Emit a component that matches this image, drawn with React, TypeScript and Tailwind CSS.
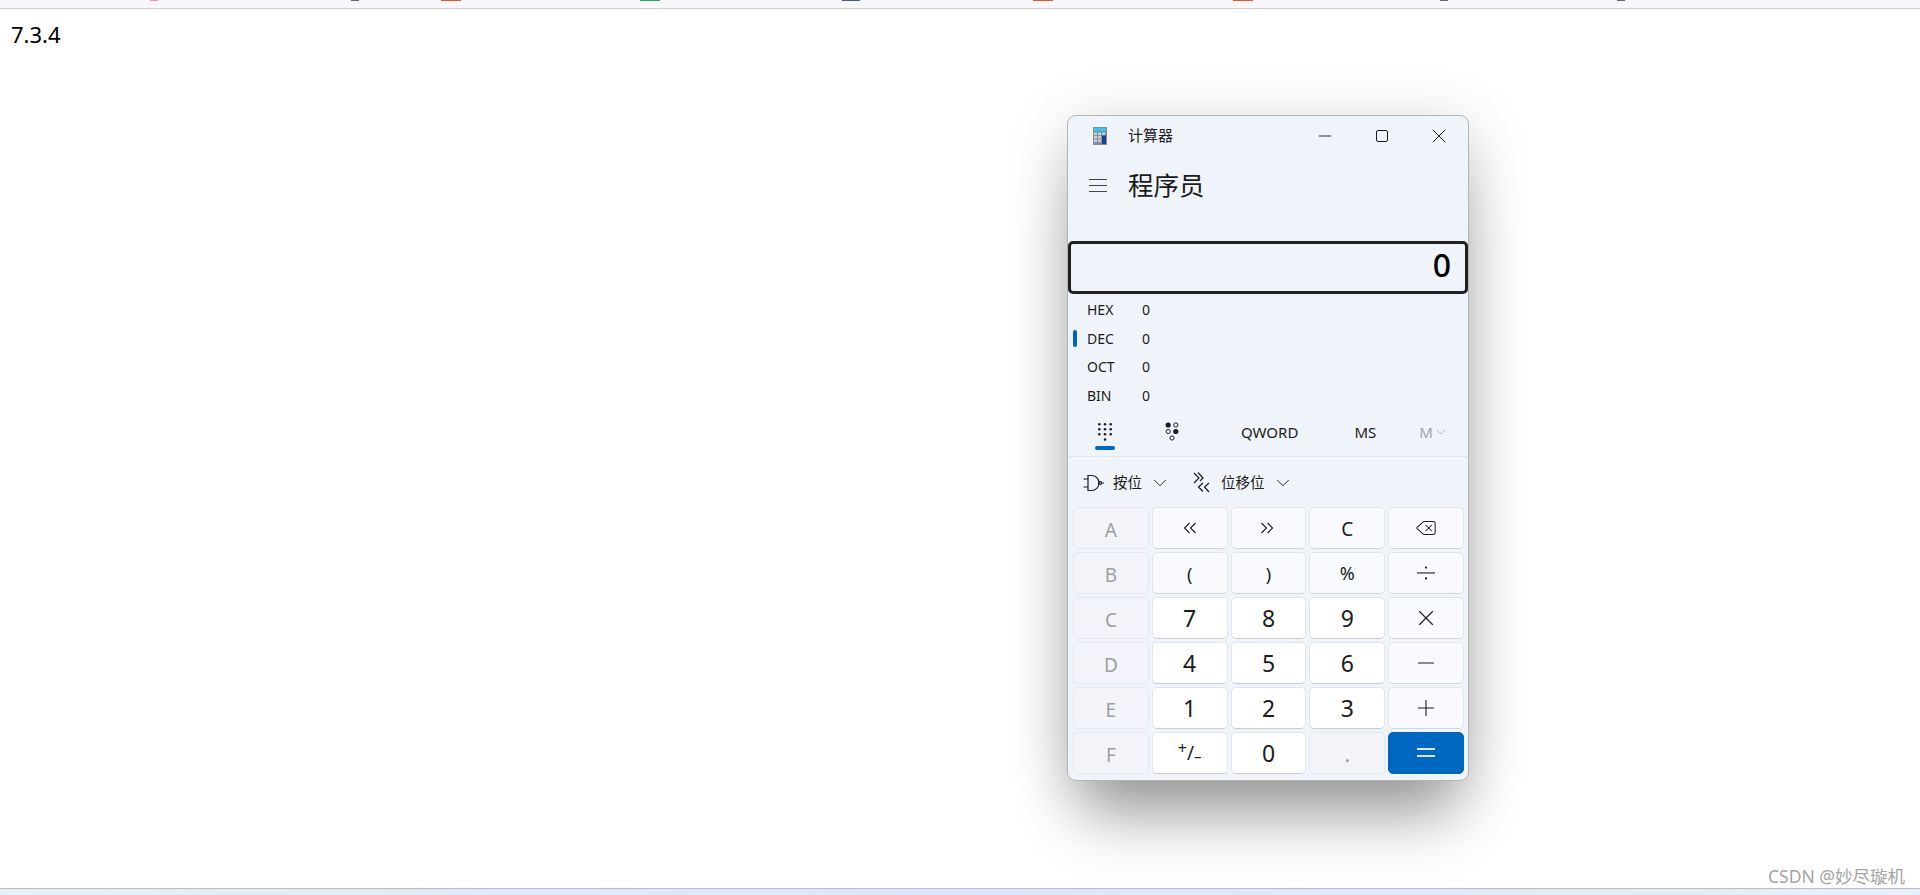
import { ChevronDown, Delete, Minus, Plus, X } from "lucide-react";
import type { ReactNode } from "react";

const CJK = "font-['Noto_Sans','Noto_Sans_CJK_SC',sans-serif]";

function AppGlyph() {
  return (
    <svg width="14" height="18" viewBox="0 0 14 18">
      <rect width="14" height="18" fill="#7f8b99" />
      <rect x="1" y="1" width="12" height="3.5" fill="#35c6ee" />
      {[5.5, 9, 12.5].map((y) =>
        [1, 5, 9].map((x) => (
          <rect key={`${x}-${y}`} x={x} y={y} width="3" height="2.6" fill={x === 9 && y > 6 ? "#17418a" : "#c9d0d8"} />
        )),
      )}
      <rect x="9" y="8.5" width="4" height="8.5" fill="#17418a" />
    </svg>
  );
}

function Keypad() {
  return (
    <svg width="14" height="18" viewBox="0 0 14 18" fill="#1b1b1b">
      {[0, 1, 2].map((r) =>
        [0, 1, 2].map((c) => <circle key={`${r}${c}`} cx={1.3 + c * 5.7} cy={1.3 + r * 5} r="1.25" />),
      )}
      <circle cx="7" cy="16.4" r="1.25" />
    </svg>
  );
}

function BitToggle() {
  return (
    <svg width="14" height="19" viewBox="0 0 14 19" strokeWidth="1">
      <circle cx="3.2" cy="3" r="2.6" fill="#1b1b1b" />
      <circle cx="10.8" cy="3" r="2.1" fill="none" stroke="#1b1b1b" />
      <circle cx="3.2" cy="9.5" r="2.1" fill="none" stroke="#1b1b1b" />
      <circle cx="10.8" cy="9.5" r="2.6" fill="#1b1b1b" />
      <circle cx="7" cy="16" r="2.1" fill="none" stroke="#1b1b1b" />
    </svg>
  );
}

function GateIcon() {
  return (
    <svg width="21" height="18" viewBox="0 0 21 18" fill="none" stroke="#1b1b1b" strokeWidth="1.2">
      <path d="M5 1.5h3.5a7.5 7.5 0 0 1 0 15H5z" />
      <path d="M0.5 5h4.5M0.5 13h4.5M18.5 9h2.5" />
      <circle cx="17.2" cy="9" r="1.4" />
    </svg>
  );
}

function ShiftIcon() {
  return (
    <svg width="17" height="21" viewBox="0 0 17 21" fill="none" stroke="#1b1b1b" strokeWidth="1.2">
      <path d="M1 1l5 5-5 5M5 0.5l5 5.5-3 3" />
      <path d="M10 11l-4.5 4 4.5 4.5M16 11l-4.5 4 4.5 5" />
    </svg>
  );
}

function ChevronPair({ flip }: { flip?: boolean }) {
  return (
    <svg width="16" height="12" viewBox="0 0 16 12" fill="none" stroke="#1b1b1b" strokeWidth="1.1">
      <path d={flip ? "M1.5 1l5 5-5 5M7.5 1l5 5-5 5" : "M7.5 1l-5 5 5 5M13.5 1l-5 5 5 5"} />
    </svg>
  );
}

function Divide() {
  return (
    <svg width="18" height="14" viewBox="0 0 18 14" fill="#1b1b1b">
      <rect y="6.4" width="18" height="1.1" />
      <circle cx="9" cy="1.6" r="1.1" />
      <circle cx="9" cy="12.4" r="1.1" />
    </svg>
  );
}

type Tone = "off" | "op" | "num" | "dim" | "eq";

const toneClass: Record<Tone, string> = {
  off: "bg-[#f2f4f9] border-[#e6e8ed] text-[#9b9ea3] text-[19px] pt-[4px]",
  op: "bg-[#f8fafd] border-[#e3e5ea] border-b-[#d2d4d9] text-[#1b1b1b] text-[18px]",
  num: "bg-white border-[#e3e5ea] border-b-[#c9cbd0] text-[#1b1b1b] text-[23px] pt-[1px]",
  dim: "bg-[#f2f4f9] border-[#e6e8ed] text-[#8b8e93] text-[19px] pt-[4px]",
  eq: "bg-[#0067c0] border-[#0067c0] text-white",
};

function Key({ tone, children }: { tone: Tone; children: ReactNode }) {
  return (
    <div className={`flex items-center justify-center rounded-[5px] border ${toneClass[tone]}`}>{children}</div>
  );
}

function Calculator() {
  const radix = [
    ["HEX", false],
    ["DEC", true],
    ["OCT", false],
    ["BIN", false],
  ] as const;

  return (
    <div
      className={`absolute left-[1067px] top-[115px] flex h-[666px] w-[402px] flex-col rounded-[9px] border border-[#b4b4b4] bg-[#eff3fa] text-[#1b1b1b] shadow-[0_50px_60px_-15px_rgba(0,0,0,0.32),0_10px_60px_rgba(0,0,0,0.18)] ${CJK}`}
    >
      {/* title bar */}
      <div className="flex h-[39px] items-center">
        <div className="ml-[25px] w-[35px]">
          <AppGlyph />
        </div>
        <span className="text-[15px] leading-none text-[#222]">计算器</span>
        <div className="ml-auto mr-[17px] flex items-center">
          <Minus size={20} strokeWidth={1.1} />
          <div className="ml-[41px] h-[12px] w-[12px] rounded-[2px] border border-[#1b1b1b]" />
          <X size={24} strokeWidth={1} className="ml-[39px]" />
        </div>
      </div>

      {/* mode header */}
      <div className="flex h-[63px] items-center pb-[2px]">
        <div className="ml-[21px] flex w-[39px] flex-col gap-[5px]">
          <span className="h-px w-[18px] bg-[#444]" />
          <span className="h-px w-[18px] bg-[#444]" />
          <span className="h-px w-[18px] bg-[#444]" />
        </div>
        <span className="text-[25.5px] leading-none">程序员</span>
      </div>

      {/* result box */}
      <div className="mt-[23px] flex h-[53px] items-center justify-end rounded-[5px] border-[3px] border-[#222] pb-[5px] pr-[14px]">
        <span className="text-[32px] font-medium leading-none text-black">0</span>
      </div>

      {/* radix readouts */}
      <div className="mt-[1px] flex flex-col text-[14px]">
        {radix.map(([name, active]) => (
          <div key={name} className="flex h-[28.7px] items-center">
            <span className={`ml-[5px] h-[17px] w-[4px] rounded-full ${active ? "bg-[#0067c0]" : ""}`} />
            <span className="ml-[10px] w-[55px]">{name}</span>
            <span>0</span>
          </div>
        ))}
      </div>

      {/* word size and memory row */}
      <div className="relative flex h-[47px] items-center border-b border-[#e1e4ea] pb-[2px] text-[15px]">
        <div className="ml-[30px] w-[67px]">
          <Keypad />
        </div>
        <BitToggle />
        <span className="ml-[62px]">QWORD</span>
        <span className="ml-[56px]">MS</span>
        <span className="ml-[43px] text-[#a0a3a8]">M</span>
        <ChevronDown size={16} strokeWidth={1.1} className="text-[#a0a3a8]" />
        <span className="absolute left-[27px] top-[36px] h-[4px] w-[20px] rounded-full bg-[#0067c0]" />
      </div>

      {/* bitwise and shift menus */}
      <div className="flex h-[50px] items-center pt-[2px] text-[14.5px]">
        <div className="ml-[15px]">
          <GateIcon />
        </div>
        <span className="ml-[9px]">按位</span>
        <ChevronDown size={22} strokeWidth={1} className="ml-[7px]" />
        <div className="ml-[22px]">
          <ShiftIcon />
        </div>
        <span className="ml-[11px]">位移位</span>
        <ChevronDown size={22} strokeWidth={1} className="ml-[7px]" />
      </div>

      {/* keypad */}
      <div className="grid flex-1 grid-cols-5 auto-rows-[42px] gap-[3px] pl-[5px] pr-[4px]">
        <Key tone="off">A</Key>
        <Key tone="op"><ChevronPair /></Key>
        <Key tone="op"><ChevronPair flip /></Key>
        <Key tone="op"><span className="pt-[2px] text-[19px]">C</span></Key>
        <Key tone="op"><Delete size={22} strokeWidth={1.1} /></Key>

        <Key tone="off">B</Key>
        <Key tone="op"><span className="pt-[3px]">(</span></Key>
        <Key tone="op"><span className="pt-[3px]">)</span></Key>
        <Key tone="op"><span className="pt-[2px]">%</span></Key>
        <Key tone="op"><Divide /></Key>

        <Key tone="off">C</Key>
        <Key tone="num">7</Key>
        <Key tone="num">8</Key>
        <Key tone="num">9</Key>
        <Key tone="op"><X size={26} strokeWidth={1} /></Key>

        <Key tone="off">D</Key>
        <Key tone="num">4</Key>
        <Key tone="num">5</Key>
        <Key tone="num">6</Key>
        <Key tone="op"><Minus size={26} strokeWidth={1} /></Key>

        <Key tone="off">E</Key>
        <Key tone="num">1</Key>
        <Key tone="num">2</Key>
        <Key tone="num">3</Key>
        <Key tone="op"><Plus size={26} strokeWidth={1} /></Key>

        <Key tone="off">F</Key>
        <Key tone="num">
          <span className="flex items-center text-[19px] leading-none">
            <span className="-translate-y-[5px] text-[16px]">+</span>
            <span>/</span>
            <span className="translate-y-[3px] text-[15px]">–</span>
          </span>
        </Key>
        <Key tone="num">0</Key>
        <Key tone="dim">.</Key>
        <Key tone="eq">
          <span className="flex flex-col gap-[5px]">
            <span className="h-[2px] w-[18px] bg-white/85" />
            <span className="h-[2px] w-[18px] bg-white/85" />
          </span>
        </Key>
      </div>
    </div>
  );
}

// Slivers of the browser's bookmark favicons peeking out of the strip above the page.
const favicons = [
  { left: "ml-[150px]", w: "w-[8px]", c: "bg-[#f08ac0]" },
  { left: "ml-[193px]", w: "w-[8px]", c: "bg-[#666a70]" },
  { left: "ml-[82px]", w: "w-[20px]", c: "bg-[#f4522d]" },
  { left: "ml-[179px]", w: "w-[20px]", c: "bg-[#2aa45a]" },
  { left: "ml-[182px]", w: "w-[18px]", c: "bg-[#4a559c]" },
  { left: "ml-[173px]", w: "w-[20px]", c: "bg-[#f4522d]" },
  { left: "ml-[180px]", w: "w-[20px]", c: "bg-[#f4522d]" },
  { left: "ml-[187px]", w: "w-[8px]", c: "bg-[#666a70]" },
  { left: "ml-[169px]", w: "w-[8px]", c: "bg-[#666a70]" },
];

export default function App() {
  return (
    <div className="relative flex h-[895px] w-[1920px] flex-col overflow-hidden bg-white">
      <div className="flex h-[9px] shrink-0 items-start border-b border-[#cbcbcb] bg-[#f8f8fa]">
        {favicons.map((f, i) => (
          <span key={i} className={`h-px ${f.left} ${f.w} ${f.c}`} />
        ))}
      </div>

      <main className="flex-1 pl-[11px] pt-[10px]">
        <p className="font-['Noto_Sans',sans-serif] text-[22px] leading-[30px] text-black">7.3.4</p>
      </main>

      <Calculator />

      <div className="h-[7px] shrink-0 border-t border-[#b9bcc2] bg-gradient-to-r from-[#e6f0fa] via-[#dbe5f7] to-[#e6f0fa]" />

      <span className={`absolute bottom-[9px] right-[15px] text-[17.5px] leading-[20px] text-[#a4a4a4] ${CJK}`}>
        CSDN @妙尽璇机
      </span>
    </div>
  );
}
